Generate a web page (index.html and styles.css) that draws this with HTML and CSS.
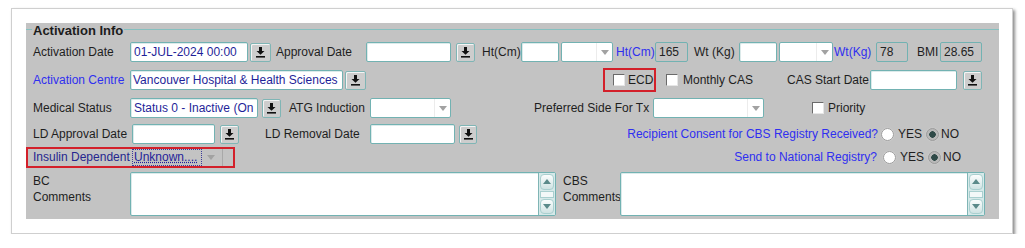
FILE: index.html
```html
<!DOCTYPE html>
<html lang="en">
<head>
    <meta charset="UTF-8">
    <title>Activation Info</title>
    <link rel="stylesheet" href="styles.css">
</head>
<body>
    <div class="card">
        <div class="panel">
            <div class="legend">
                <span class="legend-line short"></span>
                <span class="legend-text">Activation Info</span>
                <span class="legend-line"></span>
            </div>

            <div class="row r1">
                <span class="lbl l-actdate">Activation Date</span>
                <div class="field f-actdate">01-JUL-2024 00:00</div>
                <span class="btn b-actdate"><svg width="11" height="12" viewBox="0 0 11 12"><path d="M4 1h3v4h2.5L5.5 8.8 1.5 5H4z"/><rect x="1" y="10" width="9" height="1.6"/></svg></span>
                <span class="lbl l-appdate">Approval Date</span>
                <div class="field f-appdate"></div>
                <span class="btn b-appdate"><svg width="11" height="12" viewBox="0 0 11 12"><path d="M4 1h3v4h2.5L5.5 8.8 1.5 5H4z"/><rect x="1" y="10" width="9" height="1.6"/></svg></span>
                <span class="lbl l-ht">Ht(Cm)</span>
                <div class="field f-ht"></div>
                <div class="sel s-ht"><span class="arr"><svg width="8" height="5" viewBox="0 0 8 5"><path d="M0 0h8L4 5z"/></svg></span></div>
                <span class="lbl blue l-ht2">Ht(Cm)</span>
                <div class="field ro ro-ht">165</div>
                <span class="lbl l-wt">Wt (Kg)</span>
                <div class="field f-wt"></div>
                <div class="sel s-wt"><span class="arr"><svg width="8" height="5" viewBox="0 0 8 5"><path d="M0 0h8L4 5z"/></svg></span></div>
                <span class="lbl blue l-wt2">Wt(Kg)</span>
                <div class="field ro ro-wt">78</div>
                <span class="lbl l-bmi">BMI</span>
                <div class="field ro ro-bmi">28.65</div>
            </div>

            <div class="row r2">
                <span class="lbl blue l-centre">Activation Centre</span>
                <div class="field f-centre">Vancouver Hospital &amp; Health Sciences</div>
                <span class="btn b-centre"><svg width="11" height="12" viewBox="0 0 11 12"><path d="M4 1h3v4h2.5L5.5 8.8 1.5 5H4z"/><rect x="1" y="10" width="9" height="1.6"/></svg></span>
                <div class="ecd">
                    <span class="chk"></span>
                    <span class="lbl l-ecd">ECD</span>
                </div>
                <span class="chk c-monthly"></span>
                <span class="lbl l-monthly">Monthly CAS</span>
                <span class="lbl l-casdate">CAS Start Date</span>
                <div class="field f-casdate"></div>
                <span class="btn b-casdate"><svg width="11" height="12" viewBox="0 0 11 12"><path d="M4 1h3v4h2.5L5.5 8.8 1.5 5H4z"/><rect x="1" y="10" width="9" height="1.6"/></svg></span>
            </div>

            <div class="row r3">
                <span class="lbl l-status">Medical Status</span>
                <div class="field f-status">Status 0 - Inactive (On</div>
                <span class="btn b-status"><svg width="11" height="12" viewBox="0 0 11 12"><path d="M4 1h3v4h2.5L5.5 8.8 1.5 5H4z"/><rect x="1" y="10" width="9" height="1.6"/></svg></span>
                <span class="lbl l-atg">ATG Induction</span>
                <div class="sel s-atg"><span class="arr"><svg width="8" height="5" viewBox="0 0 8 5"><path d="M0 0h8L4 5z"/></svg></span></div>
                <span class="lbl l-side">Preferred Side For Tx</span>
                <div class="sel s-side"><span class="arr"><svg width="8" height="5" viewBox="0 0 8 5"><path d="M0 0h8L4 5z"/></svg></span></div>
                <span class="chk c-priority"></span>
                <span class="lbl l-priority">Priority</span>
            </div>

            <div class="row r4">
                <span class="lbl l-ldapp">LD Approval Date</span>
                <div class="field f-ldapp"></div>
                <span class="btn b-ldapp"><svg width="11" height="12" viewBox="0 0 11 12"><path d="M4 1h3v4h2.5L5.5 8.8 1.5 5H4z"/><rect x="1" y="10" width="9" height="1.6"/></svg></span>
                <span class="lbl l-ldrem">LD Removal Date</span>
                <div class="field f-ldrem"></div>
                <span class="btn b-ldrem"><svg width="11" height="12" viewBox="0 0 11 12"><path d="M4 1h3v4h2.5L5.5 8.8 1.5 5H4z"/><rect x="1" y="10" width="9" height="1.6"/></svg></span>
                <span class="lbl blue l-consent">Recipient Consent for CBS Registry Received?</span>
                <div class="yesno yn-consent">
                    <span class="radio"></span><span class="lbl yes">YES</span>
                    <span class="radio on"></span><span class="lbl no">NO</span>
                </div>
            </div>

            <div class="row r5">
                <div class="mark">
                    <span class="lbl navy l-insulin">Insulin Dependent</span>
                    <div class="sel-focus">
                        <span class="focus-text">Unknown....</span>
                        <span class="arr"><svg width="8" height="5" viewBox="0 0 8 5"><path d="M0 0h8L4 5z"/></svg></span>
                    </div>
                </div>
                <span class="lbl blue l-national">Send to National Registry?</span>
                <div class="yesno yn-national">
                    <span class="radio"></span><span class="lbl yes">YES</span>
                    <span class="radio on"></span><span class="lbl no">NO</span>
                </div>
            </div>

            <div class="row r6">
                <span class="lbl multi l-bc">BC<br>Comments</span>
                <div class="area t-bc">
                    <div class="sb">
                        <span class="sb-btn"><svg width="8" height="5" viewBox="0 0 8 5"><path d="M4 0l4 5H0z"/></svg></span>
                        <span class="sb-mid"><span class="sb-thumb"></span></span>
                        <span class="sb-btn"><svg width="8" height="5" viewBox="0 0 8 5"><path d="M0 0h8L4 5z"/></svg></span>
                    </div>
                </div>
                <span class="lbl multi l-cbs">CBS<br>Comments</span>
                <div class="area t-cbs">
                    <div class="sb">
                        <span class="sb-btn"><svg width="8" height="5" viewBox="0 0 8 5"><path d="M4 0l4 5H0z"/></svg></span>
                        <span class="sb-mid"><span class="sb-thumb"></span></span>
                        <span class="sb-btn"><svg width="8" height="5" viewBox="0 0 8 5"><path d="M0 0h8L4 5z"/></svg></span>
                    </div>
                </div>
            </div>
        </div>
    </div>
</body>
</html>
```

FILE: styles.css
```css
body {
    margin: 0;
    background: #fff;
    font-family: "Liberation Sans", Arial, sans-serif;
    font-size: 12px;
    color: #1e1e1e;
}
.card {
    margin: 8px 0 0 11px;
    width: 1002px;
    height: 226px;
    box-sizing: border-box;
    padding: 14px 13px 0 14px;
    border: 1px solid #cfcfcf;
    background: #fff;
    box-shadow: 2px 2px 3px rgba(0, 0, 0, 0.45);
}
.panel {
    width: 973px;
    height: 196px;
    background: #c3c3c3;
}

/* title with fieldset style line */
.legend {
    height: 14px;
    display: flex;
    align-items: center;
}
.legend-line {
    flex: 1;
    height: 1px;
    margin-top: -2px;
    background: #86c0c0;
}
.legend-line.short {
    flex: none;
    width: 6px;
}
.legend-text {
    padding: 0 1px;
    font-weight: bold;
    font-size: 13px;
    color: #1c1c1c;
}

.row {
    display: flex;
    align-items: center;
    height: 20px;
}
.r1 { margin-top: 5px; }
.r2 { margin-top: 8px; }
.r3 { margin-top: 8px; }
.r4 { margin-top: 6px; }
.r5 { margin-top: 3px; }
.r6 {
    margin-top: 5px;
    height: 44px;
    align-items: stretch;
}

.lbl {
    flex: none;
    white-space: nowrap;
}
.blue { color: #2f2ff0; }
.navy { color: #26268f; }

.field {
    flex: none;
    height: 20px;
    box-sizing: border-box;
    border: 1px solid #72b2b2;
    border-radius: 2px;
    background: #fff;
    box-shadow: inset 1px 1px 0 #dceaea;
    padding: 0 3px;
    line-height: 18px;
    overflow: hidden;
    white-space: nowrap;
    color: #1f1f99;
}
.field.ro {
    background: #c3c3c3;
    box-shadow: none;
    color: #222;
}

.btn {
    flex: none;
    height: 19px;
    box-sizing: border-box;
    border: 1px solid #7fb5b5;
    border-radius: 2px;
    background: #cdcdcd;
    box-shadow: inset 1px 1px 0 #f4f4f4;
    display: flex;
    align-items: center;
    justify-content: center;
}
.btn svg { fill: #111; }

.sel {
    flex: none;
    height: 20px;
    box-sizing: border-box;
    border: 1px solid #72b2b2;
    border-radius: 2px;
    background: #fff;
    display: flex;
    justify-content: flex-end;
}
.arr {
    width: 15px;
    display: flex;
    align-items: center;
    justify-content: center;
    border-left: 1px solid #ececec;
}
.arr svg { fill: #a2a2a2; }

.chk {
    flex: none;
    width: 12px;
    height: 12px;
    box-sizing: border-box;
    background: #fff;
    border: 1px solid #e6e6e6;
    border-top-color: #6a6a6a;
    border-left-color: #6a6a6a;
}

.radio {
    flex: none;
    width: 13px;
    height: 13px;
    box-sizing: border-box;
    border-radius: 50%;
    border: 1px solid #9a9a9a;
    background: #fff;
    box-shadow: 0 0 1px #eee;
}
.radio.on {
    background: radial-gradient(circle, #2f4a48 0 3px, #b8b8b8 3.5px);
}
.yesno {
    flex: none;
    display: flex;
    align-items: center;
}
.yesno .yes {
    margin-left: 4px;
    width: 25px;
}
.yesno .radio.on { margin-left: 3px; }
.yesno .no { margin-left: 2px; }

/* row 1 */
.l-actdate { margin-left: 7px; width: 97px; }
.f-actdate { width: 118px; }
.b-actdate { margin-left: 2px; width: 21px; }
.l-appdate { margin-left: 5px; width: 90px; }
.f-appdate { width: 85px; }
.b-appdate { margin-left: 5px; width: 19px; }
.l-ht { margin-left: 7px; width: 39px; }
.f-ht { width: 38px; }
.s-ht { margin-left: 2px; width: 52px; }
.l-ht2 { margin-left: 3px; width: 39px; }
.ro-ht { width: 33px; }
.l-wt { margin-left: 6px; width: 45px; }
.f-wt { width: 38px; }
.s-wt { margin-left: 2px; width: 54px; }
.l-wt2 { margin-left: 1px; width: 42px; }
.ro-wt { width: 32px; }
.l-bmi { margin-left: 9px; width: 23px; }
.ro-bmi { width: 42px; }

/* row 2 */
.l-centre { margin-left: 7px; width: 97px; }
.f-centre { width: 213px; padding-left: 2px; }
.b-centre { margin-left: 2px; width: 21px; }
.ecd {
    flex: none;
    margin-left: 237px;
    width: 53px;
    height: 24px;
    box-sizing: border-box;
    border: 2px solid #d3202a;
    padding-left: 8px;
    display: flex;
    align-items: center;
}
.l-ecd { margin-left: 3px; }
.c-monthly { margin-left: 10px; }
.l-monthly { margin-left: 5px; width: 104px; }
.l-casdate { width: 83px; }
.f-casdate { width: 87px; }
.b-casdate { margin-left: 6px; width: 19px; }

/* row 3 */
.l-status { margin-left: 7px; width: 97px; }
.f-status { width: 128px; }
.b-status { margin-left: 4px; width: 19px; }
.l-atg { margin-left: 8px; width: 81px; }
.s-atg { width: 81px; }
.l-side { margin-left: 83px; width: 119px; }
.s-side { width: 111px; }
.c-priority { margin-left: 48px; }
.l-priority { margin-left: 4px; }

/* row 4 */
.l-ldapp { margin-left: 7px; width: 99px; }
.f-ldapp { width: 83px; }
.b-ldapp { margin-left: 5px; width: 19px; }
.l-ldrem { margin-left: 26px; width: 105px; }
.f-ldrem { width: 85px; }
.b-ldrem { margin-left: 4px; width: 18px; }
.l-consent { margin-left: 141px; width: 260px; text-align: right; }
.yn-consent { margin-left: 3px; }

/* row 5 */
.mark {
    flex: none;
    width: 209px;
    height: 21px;
    box-sizing: border-box;
    border: 2px solid #d3202a;
    display: flex;
    align-items: center;
}
.l-insulin { margin-left: 5px; width: 99px; }
.sel-focus {
    flex: none;
    width: 90px;
    height: 17px;
    display: flex;
    border-right: 1px solid #a9a9a9;
}
.focus-text {
    width: 70px;
    box-sizing: border-box;
    border: 1px dotted #3a3a9a;
    color: #1f1f99;
    text-decoration: underline dotted;
    line-height: 14px;
    padding-left: 1px;
    overflow: hidden;
    white-space: nowrap;
}
.sel-focus .arr {
    border-left: none;
    width: 18px;
}
.l-national { margin-left: 382px; width: 260px; text-align: right; }
.yn-national { margin-left: 6px; }

/* row 6 */
.multi {
    line-height: 16px;
    padding-top: 1px;
}
.l-bc { margin-left: 7px; width: 97px; }
.l-cbs { margin-left: 7px; width: 57px; }
.area {
    flex: none;
    box-sizing: border-box;
    border: 1px solid #72b2b2;
    border-radius: 2px;
    background: #fff;
    box-shadow: inset 1px 1px 0 #dceaea;
    display: flex;
    justify-content: flex-end;
}
.t-bc { width: 426px; }
.t-cbs { width: 365px; }
.sb {
    width: 16px;
    display: flex;
    flex-direction: column;
    background: #d6e9e9;
    border-left: 1px solid #7fb5b5;
}
.sb-btn {
    height: 14px;
    margin: 1px;
    border-radius: 4px;
    border: 1px solid #a9cfcf;
    background: linear-gradient(#fbfdfd, #cfe3e3);
    display: flex;
    align-items: center;
    justify-content: center;
}
.sb-btn svg { fill: #5b8a8a; }
.sb-mid {
    flex: 1;
    display: flex;
    align-items: center;
    justify-content: center;
}
.sb-thumb {
    width: 12px;
    height: 5px;
    background: #f2f8f8;
    border: 1px solid #a9cfcf;
}
```
